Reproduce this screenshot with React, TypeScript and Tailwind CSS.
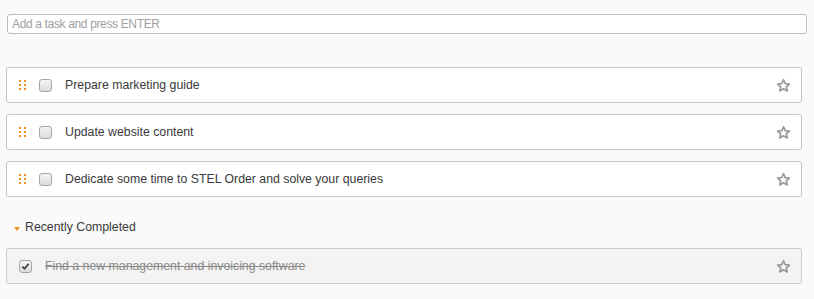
import React from "react";

const Star = () => (
  <svg width="15" height="15" viewBox="0 0 24 24" className="shrink-0">
    <path
      d="M12 2.8l2.8 6.1 6.6.7-4.9 4.5 1.4 6.5L12 17.3l-5.9 3.3 1.4-6.5-4.9-4.5 6.6-.7z"
      fill="none"
      stroke="#9a9a9a"
      strokeWidth="2.8"
      strokeLinejoin="round"
    />
  </svg>
);

const Dots = () => (
  <div className="grid grid-cols-2 gap-x-[3px] gap-y-[2px] w-[7px]">
    {[0, 1, 2, 3, 4, 5].map((i) => (
      <span key={i} className="w-[2px] h-[2px] bg-[#f39019] block" />
    ))}
  </div>
);

const Box = ({ checked }: { checked?: boolean }) => (
  <div className="w-[13px] h-[13px] rounded-[3px] border border-[#a6a6a6] bg-gradient-to-b from-[#f4f4f4] to-[#dcdcdc] flex items-center justify-center shrink-0">
    {checked && (
      <svg width="9" height="9" viewBox="0 0 10 10">
        <path d="M1.5 5.2l2.3 2.4L8.6 2" fill="none" stroke="#3a3a3a" strokeWidth="1.8" />
      </svg>
    )}
  </div>
);

const tasks = [
  "Prepare marketing guide",
  "Update website content",
  "Dedicate some time to STEL Order and solve your queries",
];

export default function App() {
  return (
    <div
      className="w-[814px] h-[299px] bg-[#fafafa] text-[12.3px] text-[#333]"
      style={{ fontFamily: '"Liberation Sans", Arial, sans-serif' }}
    >
      <div className="pt-[14px] pl-[7px] pr-[7px]">
        <div className="h-[20px] border border-[#bdbdbd] rounded-[3px] bg-white flex items-center pl-[4px] text-[#a0a0a0] text-[12px] tracking-[-0.35px]">
          Add a task and press ENTER
        </div>
      </div>
      <div className="pl-[6px] pr-[12px] pt-[33px] flex flex-col gap-[11px]">
        {tasks.map((t) => (
          <div
            key={t}
            className="h-[36px] border border-[#c6c6c6] rounded-[3px] bg-white flex items-center"
          >
            <div className="pl-[12px]">
              <Dots />
            </div>
            <div className="pl-[13px]">
              <Box />
            </div>
            <span className="pl-[13px] flex-1 text-[#3a3a3a]">{t}</span>
            <div className="pr-[10px]">
              <Star />
            </div>
          </div>
        ))}
      </div>
      <div className="pl-[14px] mt-[20px] flex items-center h-[20px]">
        <span className="w-0 h-0 border-l-[3px] border-r-[3px] border-t-[4px] border-l-transparent border-r-transparent border-t-[#f39019] mt-[3px]" />
        <span className="pl-[5px] text-[#3a3a3a]">Recently Completed</span>
      </div>
      <div className="pl-[6px] pr-[12px] pt-[11px]">
        <div className="h-[36px] border border-[#cdcdcd] rounded-[3px] bg-[#f3f3f3] flex items-center">
          <div className="pl-[12px]">
            <Box checked />
          </div>
          <span className="pl-[13px] flex-1 line-through text-[#8a8a8a]">
            Find a new management and invoicing software
          </span>
          <div className="pr-[10px]">
            <Star />
          </div>
        </div>
      </div>
    </div>
  );
}
